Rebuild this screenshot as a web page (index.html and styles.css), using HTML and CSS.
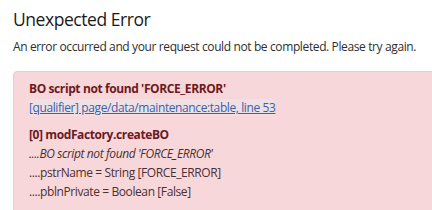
FILE: index.html
```html
<!DOCTYPE html>
<html lang="en">
<head>
    <meta charset="UTF-8">
    <title>Unexpected Error</title>
    <link rel="stylesheet" href="styles.css">
</head>
<body>
    <div class="page">
        <h1 class="title">Unexpected Error</h1>
        <p class="intro">An error occurred and your request could not be completed. Please try again.</p>

        <div class="alert">
            <div class="trace">
                <div class="msg">BO script not found 'FORCE_ERROR'</div>
                <a class="src" href="#">[qualifier] page/data/maintenance:table, line 53</a>
            </div>
            <div class="trace">
                <div class="msg">[0] modFactory.createBO</div>
                <div class="detail"><em>....BO script not found 'FORCE_ERROR'</em></div>
                <div class="detail">....pstrName = String [FORCE_ERROR]</div>
                <div class="detail">....pblnPrivate = Boolean [False]</div>
            </div>
        </div>
    </div>
</body>
</html>
```

FILE: styles.css
```css
html, body {
    overflow: hidden;
}
body {
    margin: 0;
    font-family: "Open Sans", "Noto Sans", sans-serif;
    color: #333;
    background: #fff;
}
.page {
    width: 470px;
    height: 210px;
    padding: 6px 13px 0;
    box-sizing: border-box;
}
.title {
    margin: 0;
    font-size: 17.5px;
    font-weight: 500;
    letter-spacing: -0.45px;
    color: #1a1a1a;
    line-height: 26px;
}
.intro {
    margin: 6px 0 0;
    font-size: 12px;
    line-height: 18px;
    letter-spacing: -0.38px;
    color: #2e2e2e;
}
.alert {
    margin-top: 15px;
    padding: 7px 15px 30px;
    background: #f8d7da;
    border: 1px solid #f5c6cb;
    border-radius: 4px;
    font-size: 12px;
    line-height: 19px;
    letter-spacing: -0.4px;
    color: #4a3034;
}
.trace {
    margin-bottom: 8px;
}
.msg {
    font-weight: 700;
    color: #6b1a22;
}
.src {
    color: #3d5fa6;
    background: #efe0e5;
    text-decoration: underline;
}
```
